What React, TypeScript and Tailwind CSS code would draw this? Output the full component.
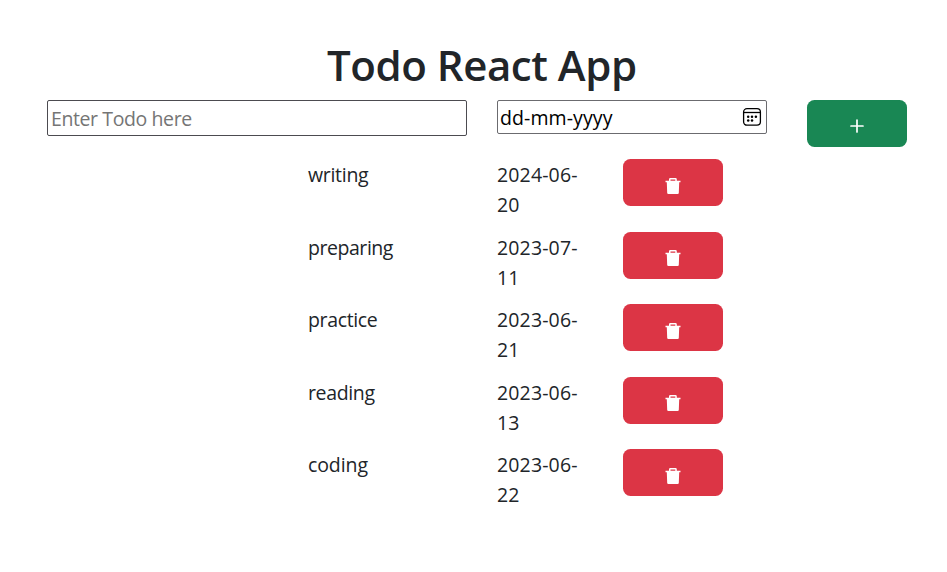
import React from 'react';

type Todo = { name: string; date: string; tracking: string };

const todos: Todo[] = [
  { name: 'writing', date: '2024-06-20', tracking: 'tracking-[-0.3px]' },
  { name: 'preparing', date: '2023-07-11', tracking: 'tracking-[-0.45px]' },
  { name: 'practice', date: '2023-06-21', tracking: 'tracking-[-0.35px]' },
  { name: 'reading', date: '2023-06-13', tracking: 'tracking-[-0.35px]' },
  { name: 'coding', date: '2023-06-22', tracking: 'tracking-[-0.1px]' },
];

function TrashIcon() {
  return (
    <svg width="16" height="16" viewBox="0 0 16 16" fill="white">
      <path
        fillRule="evenodd"
        d="M4 2.8V1.4Q4 0 5.3 0h5.2q1.3 0 1.3 1.4v1.4h3.7v1.5h-1.3L13.8 15q-.1 1-1.1 1H3.3q-1 0-1.1-1L1.8 4.3H.5V2.8H4Zm1.5 0h4.8V1.4H5.5Z"
      />
    </svg>
  );
}

function CalendarIcon() {
  return (
    <svg width="20" height="20" viewBox="0 0 20 20" fill="none" stroke="black" strokeWidth="1.3">
      <rect x="1.6" y="1.6" width="16.8" height="16.6" rx="3.4" />
      <path d="M1.6 5.5h16.8" />
      <g fill="black" stroke="none">
        <circle cx="6.2" cy="9.8" r="1.25" />
        <circle cx="10" cy="9.8" r="1.25" />
        <circle cx="13.9" cy="9.8" r="1.25" />
        <circle cx="6.2" cy="13.5" r="1.25" />
        <circle cx="10" cy="13.5" r="1.25" />
      </g>
    </svg>
  );
}

export default function App() {
  return (
    <main className="h-[572px] w-[947px] overflow-hidden bg-white pt-9 font-['Open_Sans','Noto_Sans',sans-serif] text-[19.5px] leading-[30px] text-[#212529]">
      <h1 className="ml-[327px] h-16 whitespace-nowrap text-[42px] font-semibold leading-[58px] tracking-[-0.45px]">Todo React App</h1>
      <form className="ml-[47px] flex h-[59px] items-start" onSubmit={(e) => e.preventDefault()}>
        <input
          type="text"
          placeholder="Enter Todo here"
          className="h-9 w-[420px] rounded-[2px] border border-[#4c4b50] px-[3px] tracking-[-0.4px] placeholder:text-[#757575]"
        />
        <div className="ml-[30px] flex h-[34px] w-[270px] items-center justify-between rounded-[2px] border border-[#6b6b6f] pr-1 pl-[2px] text-black">
          <span className="pt-[2px] tracking-[0.1px]">dd-mm-yyyy</span>
          <CalendarIcon />
        </div>
        <button aria-label="Add" className="ml-10 flex h-[47px] w-[100px] items-center justify-center rounded-[7.5px] bg-[#198754]">
          <svg className="mt-[5px]" width="14" height="14" viewBox="0 0 14 14" stroke="white" strokeWidth="1.7" strokeLinecap="round">
            <path d="M7 1v12M1 7h12" />
          </svg>
        </button>
      </form>
      <ul>
        {todos.map((todo) => (
          <li key={todo.name} className="ml-[308px] flex h-[72.5px] items-start">
            <span className={`mt-px w-[189px] ${todo.tracking}`}>{todo.name}</span>
            <span className="mt-px w-[96px] tracking-[0.15px]">
              {todo.date.slice(0, 8)}
              <br />
              {todo.date.slice(8)}
            </span>
            <button aria-label="Delete" className="ml-[30px] flex h-[47px] w-[100px] items-center justify-center rounded-[7.5px] bg-[#dc3545] pt-[6px]">
              <TrashIcon />
            </button>
          </li>
        ))}
      </ul>
    </main>
  );
}
